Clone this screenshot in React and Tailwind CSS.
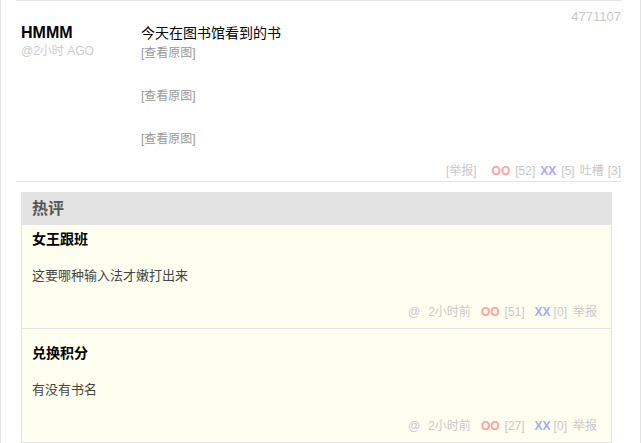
const font = { fontFamily: '"Liberation Sans", "Noto Sans CJK SC", sans-serif' };

const images = ["[查看原图]", "[查看原图]", "[查看原图]"];

const comments = [
    { name: "女王跟班", text: "这要哪种输入法才嫩打出来", oo: 51, xx: 0, first: true },
    { name: "兑换积分", text: "有没有书名", oo: 27, xx: 0 },
];

const Comment = ({ c }) => (
    <div className={`${c.first ? "pt-[4px]" : "pt-[14px] border-t border-[#e3e3e3]"} pl-[10px] pr-[14px] pb-[8px] bg-[#fffff0]`}>
        <div className="text-[14px] leading-[20px] font-bold text-black">{c.name}</div>
        <div className="mt-[17px] text-[13px] leading-[20px] text-[#444]">{c.text}</div>
        <div className="mt-[18px] flex justify-end items-center text-[12px] leading-[16px] text-[#c8c8c8]">
            <span>@</span>
            <span className="ml-[8px]">2小时前</span>
            <span className="ml-[10px] font-bold text-[#ffa0a0]">OO</span>
            <span className="ml-[5px]">[{c.oo}]</span>
            <span className="ml-[10px] font-bold text-[#a8a8ff]">XX</span>
            <span className="ml-[3px]">[{c.xx}]</span>
            <span className="ml-[6px]">举报</span>
        </div>
    </div>
);

const App = () => {
    return (
        <div style={font} className="w-[641px] h-[443px] overflow-hidden bg-white border-l border-r border-[#e2e2e2]">
            <div className="ml-[15px] mr-[19px]">
                {/* post */}
                <div className="border-t border-b border-[#e5e5e5]">
                    <div className="flex items-start pt-[8px]">
                        <div className="w-[125px] pl-[5px] mt-[14px] shrink-0">
                            <div className="text-[16px] leading-[20px] font-bold text-black">HMMM</div>
                            <div className="text-[12px] leading-[16px] text-[#cccccc]">@2小时 AGO</div>
                        </div>
                        <div className="flex-1 mt-[14px]">
                            <div className="text-[14px] leading-[20px] text-black">今天在图书馆看到的书</div>
                            <div className="mt-[2px]">
                                {images.map((t, i) => (
                                    <div key={i} className={`text-[12px] leading-[16px] text-[#999] ${i < 2 ? "h-[43px]" : ""}`}>
                                        {t}
                                    </div>
                                ))}
                            </div>
                        </div>
                        <div className="text-[13px] leading-[16px] text-[#c8c8c8]">4771107</div>
                    </div>
                    <div className="mt-[16px] pb-[2px] flex justify-end items-center text-[12px] leading-[16px] text-[#c8c8c8]">
                        <span>[举报]</span>
                        <span className="ml-[15px] font-bold text-[#ffa0a0]">OO</span>
                        <span className="ml-[5px]">[52]</span>
                        <span className="ml-[5px] font-bold text-[#a8a8ff]">XX</span>
                        <span className="ml-[5px]">[5]</span>
                        <span className="ml-[5px]">吐槽</span>
                        <span className="ml-[4px]">[3]</span>
                    </div>
                </div>

                {/* hot comments */}
                <div className="mt-[10px] ml-[5px] w-[591px] border border-[#e3e3e3]">
                    <div className="h-[32px] bg-[#e3e3e3] flex items-center pl-[10px] text-[16px] leading-[20px] font-bold text-[#555]">
                        热评
                    </div>
                    {comments.map((c, i) => (
                        <Comment key={i} c={c} />
                    ))}
                </div>
            </div>
        </div>
    );
};

export default App;
